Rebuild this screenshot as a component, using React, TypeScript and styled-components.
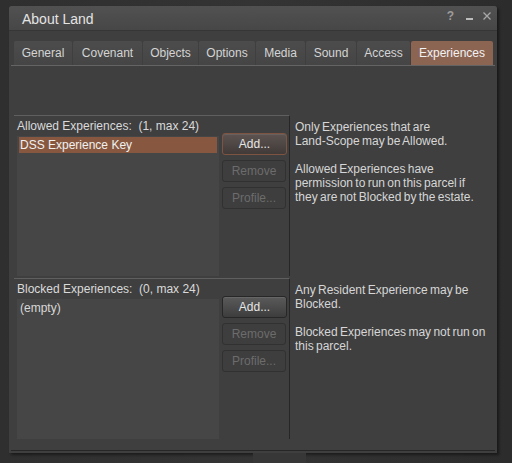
import type { ReactNode } from "react";
import styled, { createGlobalStyle } from "styled-components";

const GlobalStyle = createGlobalStyle`
  html, body {
    margin: 0;
    padding: 0;
    background: #2e2e2e;
  }
  body {
    font-family: "Liberation Sans", Arial, sans-serif;
    font-size: 12px;
    color: #dcdcdc;
  }
`;

const tabs = [
  { label: "General", width: 58 },
  { label: "Covenant", width: 69 },
  { label: "Objects", width: 55 },
  { label: "Options", width: 56 },
  { label: "Media", width: 49 },
  { label: "Sound", width: 50 },
  { label: "Access", width: 53 },
  { label: "Experiences", width: 82, active: true },
];

interface SectionProps {
  title: string;
  items: string[];
  selected?: boolean;
  addFocused?: boolean;
  notes: ReactNode[];
}

const Section = ({ title, items, selected, addFocused, notes }: SectionProps) => (
  <SectionRow>
    <ListColumn>
      <ListArea>
        <ListLabel>{title}</ListLabel>
        <ListBox>
          {items.map((item) => (
            <ListItem key={item} $selected={selected}>
              {item}
            </ListItem>
          ))}
        </ListBox>
      </ListArea>
      <ButtonStack>
        <Button $focused={addFocused}>Add...</Button>
        <Button disabled>Remove</Button>
        <Button disabled>Profile...</Button>
      </ButtonStack>
    </ListColumn>
    <Notes>
      {notes.map((n, i) => (
        <p key={i}>{n}</p>
      ))}
    </Notes>
  </SectionRow>
);

const App = () => {
  return (
    <Page>
      <GlobalStyle />
      <Window>
        <TitleBar>
          <Title>About Land</Title>
          <Controls>
            <Help>?</Help>
            <Minimize />
            <Close>
              <svg width="8" height="8" viewBox="0 0 8 8">
                <path d="M0.5 0.5 L7.5 7.5 M7.5 0.5 L0.5 7.5" stroke="#a8a8a8" strokeWidth="1.3" />
              </svg>
            </Close>
          </Controls>
        </TitleBar>
        <TabBar>
          {tabs.map((t) => (
            <Tab key={t.label} $width={t.width} $active={t.active}>
              {t.label}
            </Tab>
          ))}
        </TabBar>
        <Panel>
          <Section
            title="Allowed Experiences:  (1, max 24)"
            items={["DSS Experience Key"]}
            selected
            addFocused
            notes={[
              <>
                Only Experiences that are <NoWrap>Land-Scope</NoWrap> may be Allowed.
              </>,
              "Allowed Experiences have permission to run on this parcel if they are not Blocked by the estate.",
            ]}
          />
          <Section
            title="Blocked Experiences:  (0, max 24)"
            items={["(empty)"]}
            notes={[
              "Any Resident Experience may be Blocked.",
              "Blocked Experiences may not run on this parcel.",
            ]}
          />
        </Panel>
        <BottomRule />
      </Window>
      <BehindStrip />
    </Page>
  );
};

const Page = styled.div`
  width: 512px;
  height: 463px;
  overflow: hidden;
  display: flex;
  flex-direction: column;
  background: linear-gradient(90deg, #2f2f2f 0%, #343434 50%, #2c2c2c 100%);
`;

const Window = styled.div`
  margin: 6px 0 0 9px;
  width: 488px;
  height: 447px;
  box-sizing: border-box;
  background: #3f3f3f;
  border-radius: 3px 3px 0 0;
  box-shadow: 2px 2px 3px rgba(0, 0, 0, 0.45);
  display: flex;
  flex-direction: column;
  flex-shrink: 0;
`;

const TitleBar = styled.div`
  height: 24px;
  display: flex;
  align-items: center;
  justify-content: space-between;
  padding: 0 6px 0 13px;
  background: linear-gradient(#515151, #474747);
  border-bottom: 1px solid #363636;
  border-radius: 3px 3px 0 0;
`;

const Title = styled.span`
  font-size: 14px;
  color: #e4e4e4;
  padding-top: 2px;
`;

const Controls = styled.div`
  display: flex;
  align-items: center;
  margin-top: -5px;
`;

const Help = styled.span`
  font-size: 12px;
  font-weight: bold;
  color: #9c9c9c;
  margin-right: 12px;
`;

const Minimize = styled.span`
  width: 7px;
  height: 2px;
  margin-top: 7px;
  margin-right: 10px;
  background: #bcbcbc;
`;

const Close = styled.span`
  display: flex;
  svg {
    display: block;
  }
`;

const TabBar = styled.div`
  display: flex;
  gap: 1px;
  margin: 10px 2px 0;
  padding-left: 3px;
  border-bottom: 1px solid #646464;
  height: 24px;
`;

const Tab = styled.div<{ $width: number; $active?: boolean }>`
  width: ${(p) => p.$width}px;
  height: 24px;
  display: flex;
  align-items: center;
  justify-content: center;
  font-size: 12px;
  color: ${(p) => (p.$active ? "#f2f2f2" : "#d4d4d4")};
  background: ${(p) =>
    p.$active ? "#8c6452" : "linear-gradient(#4c4c4c, #454545)"};
  border-radius: 2px 2px 0 0;
`;

const Panel = styled.div`
  display: flex;
  flex-direction: column;
  gap: 2px;
  margin: 49px 0 0 5px;
`;

const SectionRow = styled.div`
  display: flex;
`;

const ListColumn = styled.div`
  width: 276px;
  box-sizing: border-box;
  display: flex;
  gap: 3px;
  padding-left: 3px;
  border-top: 1px solid #5f5f5f;
  border-right: 1px solid #262626;
`;

const ListArea = styled.div`
  display: flex;
  flex-direction: column;
`;

const ListLabel = styled.div`
  height: 20px;
  line-height: 20px;
  color: #dadada;
  white-space: pre;
`;

const ListBox = styled.div`
  width: 202px;
  height: 140px;
  background: #464646;
  padding: 1px 2px;
  box-sizing: border-box;
`;

const ListItem = styled.div<{ $selected?: boolean }>`
  height: 16px;
  line-height: 16px;
  padding-left: 1px;
  color: ${(p) => (p.$selected ? "#f0f0f0" : "#d8d8d8")};
  background: ${(p) => (p.$selected ? "#87583f" : "transparent")};
`;

const ButtonStack = styled.div`
  display: flex;
  flex-direction: column;
  gap: 5px;
  padding-top: 17px;
`;

const Button = styled.button<{ $focused?: boolean }>`
  width: 65px;
  height: 22px;
  padding: 0;
  font-family: "Liberation Sans", Arial, sans-serif;
  font-size: 12px;
  border-radius: 3px;
  color: #e6e6e6;
  border: 1px solid ${(p) => (p.$focused ? "#7d5441" : "#272727")};
  background: ${(p) =>
    p.$focused
      ? "linear-gradient(#5d5451, #403a38)"
      : "linear-gradient(#5a5a5a, #3d3d3d)"};
  box-shadow: inset 0 1px 0 rgba(255, 255, 255, 0.08);

  &:disabled {
    width: 64px;
    color: #6c6c6c;
    background: #3e3e3e;
    border-color: #313131;
    box-shadow: none;
  }
`;

const Notes = styled.div`
  width: 192px;
  padding: 5px 0 0 5px;
  color: #d6d6d6;
  line-height: 14px;
  word-spacing: -1px;

  p {
    margin: 0 0 14px;
  }
`;

const NoWrap = styled.span`
  white-space: nowrap;
`;

const BottomRule = styled.div`
  margin: 11px 2px 0;
  border-top: 1px solid #262626;
`;

const BehindStrip = styled.div`
  margin-left: 253px;
  width: 53px;
  height: 10px;
  background: #373737;
`;

export default App;
